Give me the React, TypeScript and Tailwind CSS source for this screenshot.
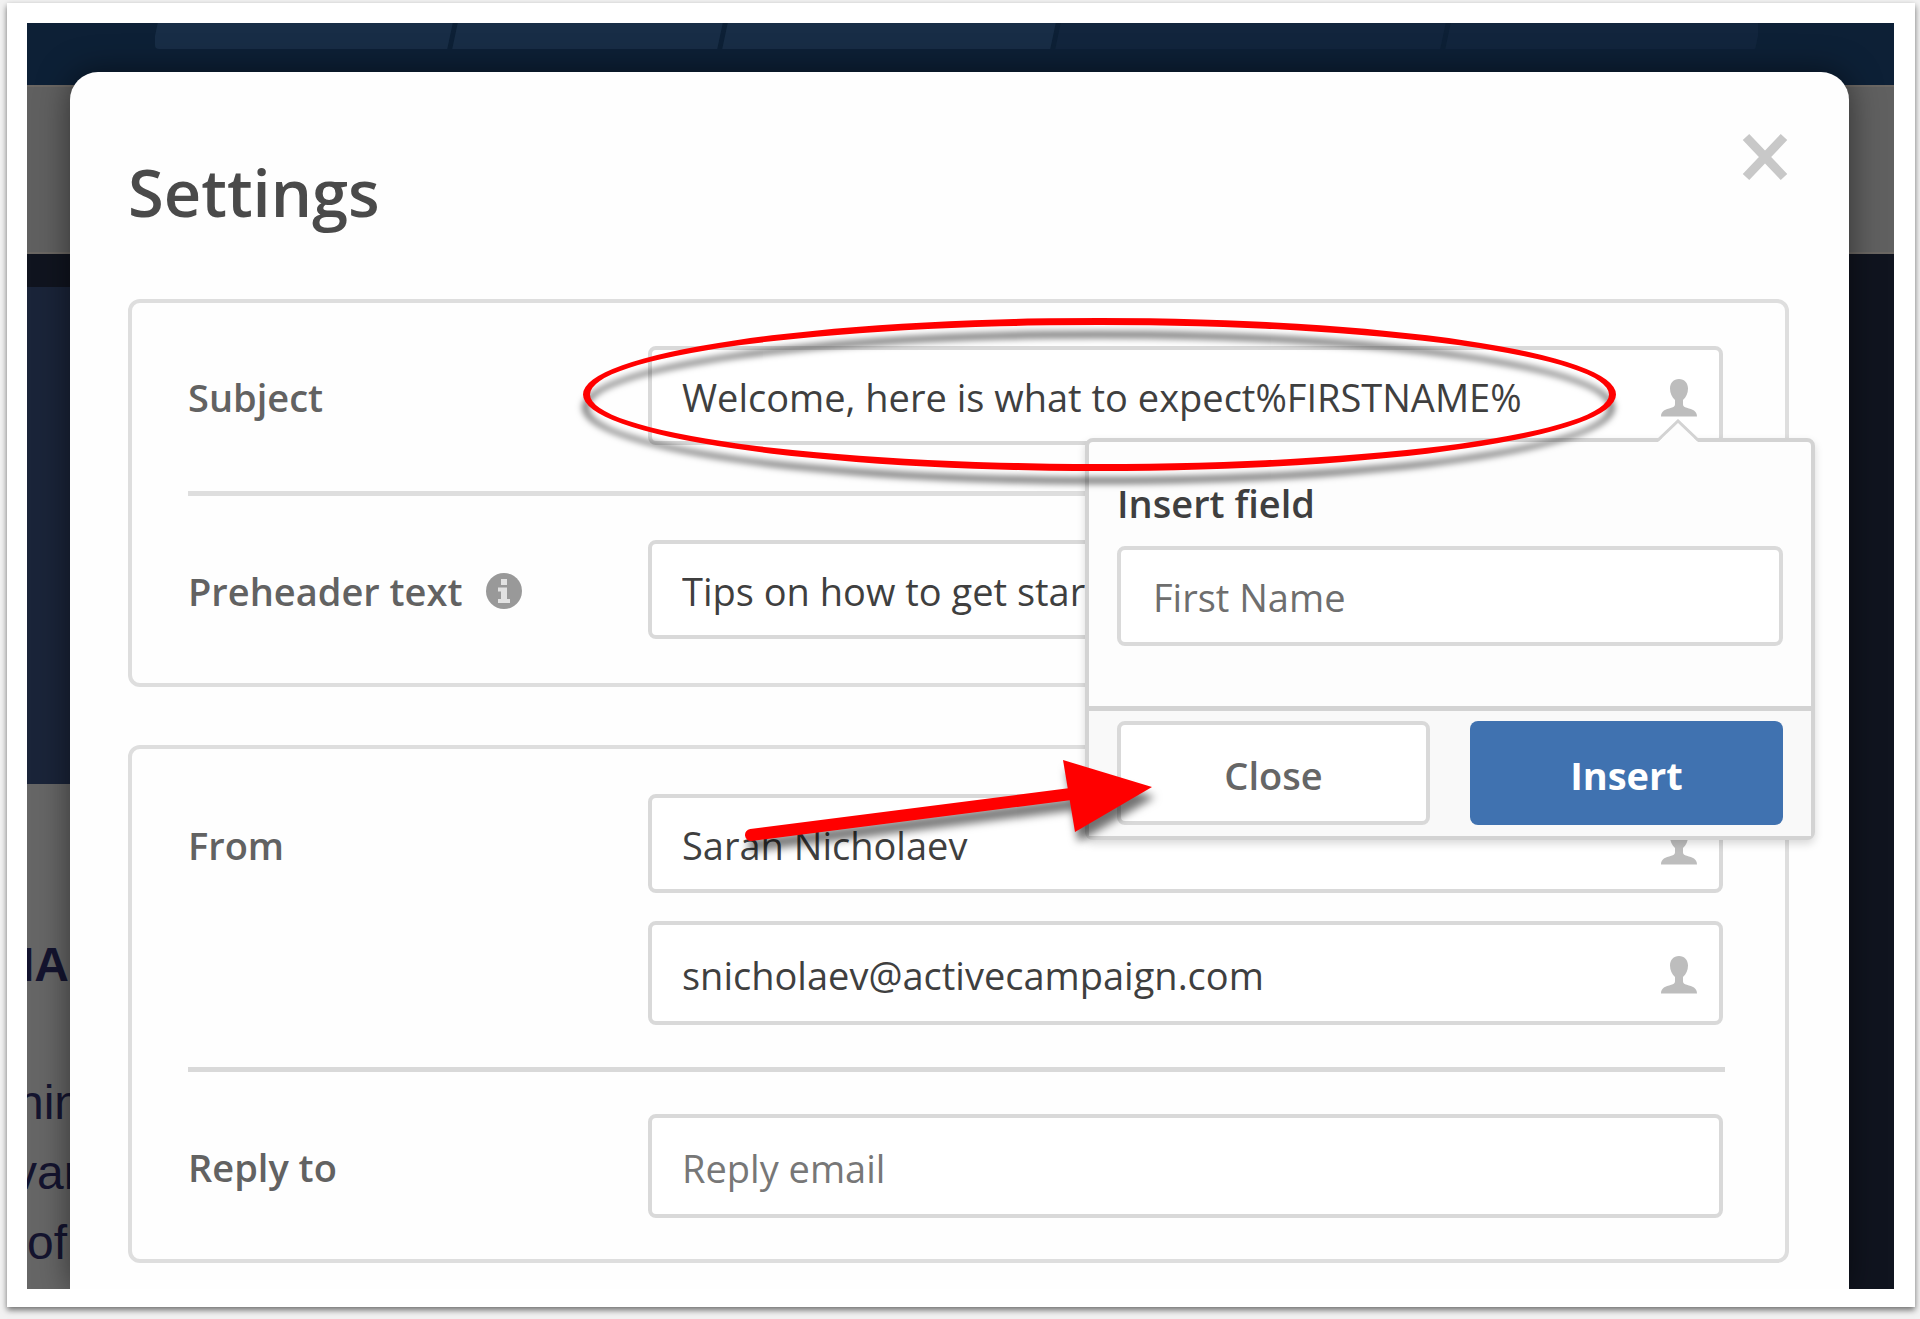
import type { ReactNode } from "react";
import clsx from "clsx";

const PersonIcon = ({ className }: { className?: string }) => {
  return (
    <svg viewBox="0 0 36 38" className={className} fill="currentColor" aria-hidden="true">
      <path d="M18 0c5.400 0 9 4 9 9.600 0 4.600-2 9-5 11.400v4.200c0 2 1.200 2.800 3.800 3.600C31.500 30.500 36 31.800 36 37.500H0c0-5.700 4.500-7 10.200-8.700 2.600-.8 3.800-1.600 3.800-3.600V21c-3-2.400-5-6.800-5-11.400C9 4 12.600 0 18 0z" />
    </svg>
  );
};

const InfoIcon = () => {
  return (
    <svg viewBox="0 0 36 36" className="h-9 w-9" aria-hidden="true">
      <circle cx="18" cy="18" r="18" fill="#999999" />
      <path d="M15 6h6v6h-6zM12 14.500h9V26h3v4H12v-4h3v-7.500h-3z" fill="#e2e2e2" />
    </svg>
  );
};

const Panel = ({ children, className }: { children: ReactNode; className?: string }) => {
  return (
    <section
      className={clsx("rounded-xl border-4 border-[#dedede] pl-14 pr-[60px]", className)}
    >
      {children}
    </section>
  );
};

type FieldProps = {
  id: string;
  label: string;
  value?: string;
  placeholder?: string;
  type?: string;
  tall?: boolean;
  picker?: boolean;
  children?: ReactNode;
};

const Field = ({ id, label, value, placeholder, type = "text", tall, picker, children }: FieldProps) => {
  return (
    <div className="relative">
      <input
        id={id}
        type={type}
        aria-label={label}
        defaultValue={value}
        placeholder={placeholder}
        className={clsx(
          "block w-full rounded-lg border-4 border-[#d9d9d9] bg-white pl-[30px] pr-20 pt-[3px] text-[38px] text-[#3f3f3f] outline-none placeholder:text-[#777777]",
          tall ? "h-[104px]" : "h-[99px]"
        )}
      />
      {picker && (
        <button
          type="button"
          aria-label="Insert personalization"
          className="absolute inset-y-0 right-[26px] flex items-center pt-1 text-[#bdbdbd]"
        >
          <PersonIcon className="h-[38px] w-9" />
        </button>
      )}
      {children}
    </div>
  );
};

const Row = ({ htmlFor, label, info, tall, children }: {
  htmlFor: string;
  label: string;
  info?: boolean;
  tall?: boolean;
  children: ReactNode;
}) => {
  return (
    <div className="grid grid-cols-[460px_1fr] items-start pr-0.5">
      <div className={clsx("flex items-center gap-6 pt-[3px]", tall ? "h-[104px]" : "h-[99px]")}>
        <label htmlFor={htmlFor} className="text-[38px] font-semibold text-[#626262]">
          {label}
        </label>
        {info && <InfoIcon />}
      </div>
      <div className="flex flex-col gap-7">{children}</div>
    </div>
  );
};

const InsertPopover = () => {
  return (
    <div className="absolute -right-[92px] top-[92px] z-10 w-[730px] rounded-lg border-4 border-[#d3d3d3] bg-[#fdfdfd] shadow-[0_4px_8px_rgba(0,0,0,0.15)]">
      <svg
        viewBox="0 0 42 24"
        className="absolute -top-[23px] right-[112px] h-6 w-[42px]"
        aria-hidden="true"
      >
        <path d="M0 24 21 3 42 24z" fill="#fdfdfd" />
        <path d="M1 21 21 2 41 21" fill="none" stroke="#d3d3d3" strokeWidth="3" />
      </svg>
      <div className="px-7 pb-[60px] pt-[39px]">
        <label
          htmlFor="insert-field"
          className="mb-[21px] block text-[38px] font-semibold leading-[44px] text-[#3f3f3f]"
        >
          Insert field
        </label>
        <select
          id="insert-field"
          className="h-[100px] w-full appearance-none rounded-lg border-4 border-[#dadada] bg-white pl-8 pt-[3px] text-[38px] text-[#6e6e6e]"
        >
          <option>First Name</option>
        </select>
      </div>
      <div className="grid grid-cols-2 gap-10 border-t-[5px] border-[#d3d3d3] bg-[#f9f9f9] px-7 pb-[11px] pt-[10px]">
        <button
          type="button"
          className="h-[104px] rounded-lg border-4 border-[#d9d9d9] bg-white pt-1 text-[38px] font-semibold text-[#666666]"
        >
          Close
        </button>
        <button
          type="button"
          className="h-[104px] rounded-lg bg-[#4072b0] pt-1 text-[38px] font-bold text-white"
        >
          Insert
        </button>
      </div>
      <svg
        viewBox="0 0 430 110"
        className="pointer-events-none absolute -left-[348px] top-[308px] h-[110px] w-[430px] overflow-visible drop-shadow-[3px_10px_4px_rgba(0,0,0,0.55)]"
        aria-hidden="true"
      >
        <path d="M10 85 330 44" stroke="#ff0000" strokeWidth="12" strokeLinecap="round" />
        <path d="M322 10 411 37 334 82z" fill="#ff0000" />
      </svg>
    </div>
  );
};

const crumbs = [
  { id: 1, className: "flex-[298] bg-[#182d46]" },
  { id: 2, className: "flex-[268] bg-[#182d46]" },
  { id: 3, className: "flex-[332] bg-[#182d46]" },
  { id: 4, className: "flex-[389] bg-[#12253d]" },
  { id: 5, className: "flex-[314] bg-[#12253d]" },
];

// Dimmed page that shows around the dialog
const Backdrop = () => {
  return (
    <div className="col-start-1 row-start-1 flex min-w-0 flex-col bg-[#10141f]">
      <div className="h-[62px] bg-[#0d2036] pl-32 pr-[136px]">
        <div className="flex h-[26px] gap-[5px] overflow-hidden rounded-b">
          {crumbs.map((c) => (
            <span key={c.id} className={clsx("-skew-x-12", c.className)}></span>
          ))}
        </div>
      </div>
      <div className="h-[169px] border-y-2 border-[#6b6763] bg-[#606060]"></div>
      <div className="flex w-20 flex-1 flex-col pt-[33px]">
        <div className="h-[497px] bg-[#1a2439]"></div>
        <div className="flex-1 whitespace-nowrap bg-[#666666] pt-[146px] font-['Liberation_Sans',Arial,sans-serif] text-[48px] leading-[70px] text-[#14142f]">
          <p className="-ml-1.5 mb-[68px] h-[70px] font-bold">IA</p>
          <p className="-ml-2.5">nin</p>
          <p className="-ml-3.5">var</p>
          <p>of</p>
        </div>
      </div>
    </div>
  );
};

const App = () => {
  return (
    <div className="min-h-screen bg-[#f2f2f2] pb-[11px] pl-[7px] pr-[5px] pt-[3px] font-['Open_Sans','Noto_Sans',sans-serif]">
      <div className="bg-white pb-[18px] pl-5 pr-[21px] pt-5 shadow-[0_3px_6px_rgba(0,0,0,0.55)]">
        <div className="grid overflow-hidden">
          <Backdrop />
          <main className="z-10 col-start-1 row-start-1 ml-[43px] mr-[45px] mt-[49px] rounded-t-[28px] bg-[#fefefe] pb-[26px] pl-[58px] pr-[60px] shadow-[0_0_32px_rgba(0,0,0,0.5)]">
            <header className="flex h-[227px] items-start justify-between">
              <h1 className="pt-[75px] text-[65px] font-semibold leading-[90px] text-[#4a4a4a]">
                Settings
              </h1>
              <button type="button" aria-label="Close settings" className="mt-[61px]">
                <svg viewBox="0 0 48 48" className="h-12 w-12" aria-hidden="true">
                  <path d="M5 4 43 44M43 4 5 44" stroke="#c8c8c8" strokeWidth="9" />
                </svg>
              </button>
            </header>

            <Panel className="pb-11 pt-[43px]">
              <Row htmlFor="subject" label="Subject">
                <Field
                  id="subject"
                  label="Subject"
                  value="Welcome, here is what to expect%FIRSTNAME%"
                  picker
                >
                  <InsertPopover />
                  <div className="pointer-events-none absolute -left-[65px] -top-7 right-[107px] z-20 h-[153px] rounded-[50%] border-[7px] border-[#ff0000] drop-shadow-[-1px_13px_3px_rgba(0,0,0,0.5)]"></div>
                </Field>
              </Row>
              <hr className="mb-11 mt-[46px] border-t-[5px] border-[#dedede]" />
              <Row htmlFor="preheader" label="Preheader text" info>
                <Field id="preheader" label="Preheader text" value="Tips on how to get started" />
              </Row>
            </Panel>

            <Panel className="mt-[58px] pb-[41px] pt-[45px]">
              <Row htmlFor="from-name" label="From">
                <Field id="from-name" label="From name" value="Sarah Nicholaev" picker />
                <Field
                  id="from-email"
                  label="From email"
                  type="email"
                  value="snicholaev@activecampaign.com"
                  tall
                  picker
                />
              </Row>
              <hr className="my-[42px] border-t-[5px] border-[#d9d9d9]" />
              <Row htmlFor="reply-to" label="Reply to" tall>
                <Field id="reply-to" label="Reply to" type="email" placeholder="Reply email" tall />
              </Row>
            </Panel>
          </main>
        </div>
      </div>
    </div>
  );
};

export default App;
